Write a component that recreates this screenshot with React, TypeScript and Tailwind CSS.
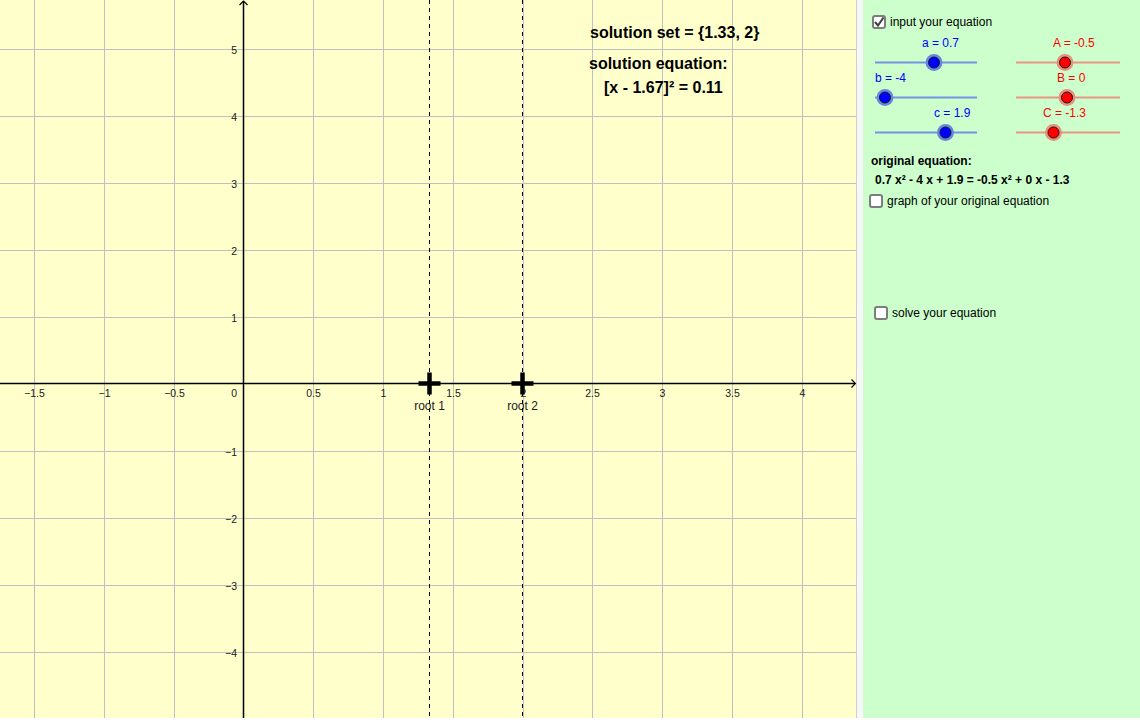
import React from "react";

const X0 = 243.3;
const UX = 139.6;
const Y0 = 383.5;
const UY = 67;

const fmt = (v: number) => (v < 0 ? "\u2212" + String(Math.abs(v)) : String(v));
const px = (v: number) => Math.round(X0 + v * UX) + 0.5;
const py = (v: number) => Math.round(Y0 - v * UY) + 0.5;

const xGrid = [-1.5, -1, -0.5, 0.5, 1, 1.5, 2, 2.5, 3, 3.5, 4];
const yGrid = [-4, -3, -2, -1, 1, 2, 3, 4, 5];

function Graph() {
  const font = "'Liberation Sans', Arial, sans-serif";
  const roots = [
    { x: 429.5, label: "root 1" },
    { x: 522.5, label: "root 2" },
  ];
  return (
    <svg width={856} height={718} className="block" style={{ fontFamily: font }}>
      <rect x={0} y={0} width={856} height={718} fill="#ffffcc" />
      {xGrid.map((v) => (
        <line key={"gx" + v} x1={px(v)} x2={px(v)} y1={0} y2={718} stroke="#c0c0c0" strokeWidth={1} />
      ))}
      {yGrid.map((v) => (
        <line key={"gy" + v} x1={0} x2={856} y1={py(v)} y2={py(v)} stroke="#c0c0c0" strokeWidth={1} />
      ))}
      {/* axes */}
      <line x1={0} x2={855} y1={383.5} y2={383.5} stroke="#000" strokeWidth={1.5} />
      <polyline points="851.5,379.5 855.5,383.5 851.5,387.5" fill="none" stroke="#000" strokeWidth={1.2} />
      <line x1={243.5} x2={243.5} y1={1} y2={718} stroke="#000" strokeWidth={1.5} />
      <polyline points="239.5,5 243.5,1 247.5,5" fill="none" stroke="#000" strokeWidth={1.2} />
      {/* x labels */}
      {xGrid.map((v) => (
        <text key={"lx" + v} x={px(v)} y={397} fontSize={10.5} textAnchor="middle" fill="#1a1a1a">
          {fmt(v)}
        </text>
      ))}
      <text x={237} y={397} fontSize={10.5} textAnchor="end" fill="#1a1a1a">
        0
      </text>
      {/* y labels */}
      {yGrid.map((v) => (
        <text key={"ly" + v} x={237} y={py(v) + 4} fontSize={10.5} textAnchor="end" fill="#1a1a1a">
          {fmt(v)}
        </text>
      ))}
      {/* dashed root lines */}
      {roots.map((r) => (
        <line key={"d" + r.x} x1={r.x} x2={r.x} y1={0} y2={718} stroke="#000" strokeWidth={1} strokeDasharray="4 4" />
      ))}
      {roots.map((r) => (
        <g key={"p" + r.x}>
          <line x1={r.x - 11} x2={r.x + 11} y1={383.5} y2={383.5} stroke="#000" strokeWidth={4.5} />
          <line x1={r.x} x2={r.x} y1={372.5} y2={394.5} stroke="#000" strokeWidth={4.5} />
          <text x={r.x} y={410} fontSize={12} textAnchor="middle" fill="#1a1a1a">
            {r.label}
          </text>
        </g>
      ))}
      {/* solution texts */}
      <text x={590} y={38} fontSize={16} fontWeight="bold" fill="#000">
        solution set = {"{"}1.33, 2{"}"}
      </text>
      <text x={589} y={68.5} fontSize={16} fontWeight="bold" fill="#000">
        solution equation:
      </text>
      <text x={604} y={93} fontSize={16} fontWeight="bold" fill="#000">
        [x - 1.67]² = 0.11
      </text>
    </svg>
  );
}

function Checkbox({ checked }: { checked?: boolean }) {
  return (
    <div className="w-[14px] h-[14px] shrink-0 rounded-[3px] border-2 border-[#7d7d7d] bg-white flex items-center justify-center">
      {checked && (
        <svg width={10} height={10} viewBox="0 0 10 10">
          <polyline points="1,5 4,8.5 9.5,0.5" fill="none" stroke="#3f3f3f" strokeWidth={2} />
        </svg>
      )}
    </div>
  );
}

type SliderData = {
  label: string;
  labelClass: string;
  knob: number;
  color: "blue" | "red";
};

function Slider({ s, width }: { s: SliderData; width: number }) {
  const isBlue = s.color === "blue";
  const track = isBlue ? "#7394e6" : "#ea9584";
  const halo = isBlue ? "#6787de" : "#e6907e";
  const dot = isBlue ? "#0000ff" : "#ff0000";
  return (
    <div>
      <div className={"h-[14px] leading-[14px] whitespace-nowrap " + s.labelClass + (isBlue ? " text-[#0000ff]" : " text-[#ff0000]")}>
        {s.label}
      </div>
      <svg width={width} height={21} className="block overflow-visible">
        <line x1={0} x2={width} y1={12.5} y2={12.5} stroke={track} strokeWidth={2} />
        <circle cx={s.knob} cy={12.5} r={8.5} fill={halo} />
        <circle cx={s.knob} cy={12.5} r={5.5} fill={dot} stroke="#1a1a1a" strokeWidth={1} />
      </svg>
    </div>
  );
}

const left: SliderData[] = [
  { label: "a = 0.7", labelClass: "pl-[47px]", knob: 59, color: "blue" },
  { label: "b = -4", labelClass: "pl-0", knob: 10, color: "blue" },
  { label: "c = 1.9", labelClass: "pl-[59px]", knob: 70.5, color: "blue" },
];
const right: SliderData[] = [
  { label: "A = -0.5", labelClass: "pl-[37px]", knob: 49, color: "red" },
  { label: "B = 0", labelClass: "pl-[41px]", knob: 51, color: "red" },
  { label: "C = -1.3", labelClass: "pl-[27px]", knob: 37.5, color: "red" },
];

function Panel() {
  return (
    <div className="flex-1 bg-[#ccffcc] text-[12px] leading-[14px] text-black font-['Liberation_Sans',Arial,sans-serif]">
      <div className="mt-[15px] pl-[9px] flex items-center gap-[4px] h-[14px]">
        <Checkbox checked />
        <span>input your equation</span>
      </div>
      <div className="mt-[7px] pl-[12px] flex gap-[39px]">
        <div className="w-[102px]">
          {left.map((s) => (
            <Slider key={s.label} s={s} width={102} />
          ))}
        </div>
        <div className="w-[104px]">
          {right.map((s) => (
            <Slider key={s.label} s={s} width={104} />
          ))}
        </div>
      </div>
      <div className="mt-[13px] pl-[8px] font-bold">original equation:</div>
      <div className="mt-[5px] pl-[12px] font-bold">0.7 x² - 4 x + 1.9 = -0.5 x² + 0 x - 1.3</div>
      <div className="mt-[7px] pl-[6px] flex items-center gap-[4px] h-[14px]">
        <Checkbox />
        <span>graph of your original equation</span>
      </div>
      <div className="mt-[98px] pl-[11px] flex items-center gap-[4px] h-[14px]">
        <Checkbox />
        <span>solve your equation</span>
      </div>
    </div>
  );
}

export default function App() {
  return (
    <div className="w-[1140px] h-[720px] bg-white overflow-hidden font-['Liberation_Sans',Arial,sans-serif]">
      <div className="flex h-[718px]">
        <div className="w-[856px] shrink-0">
          <Graph />
        </div>
        <div className="w-[7px] shrink-0 border-l border-[#d0d0d0] bg-[#f7f7f7]" />
        <Panel />
      </div>
    </div>
  );
}
